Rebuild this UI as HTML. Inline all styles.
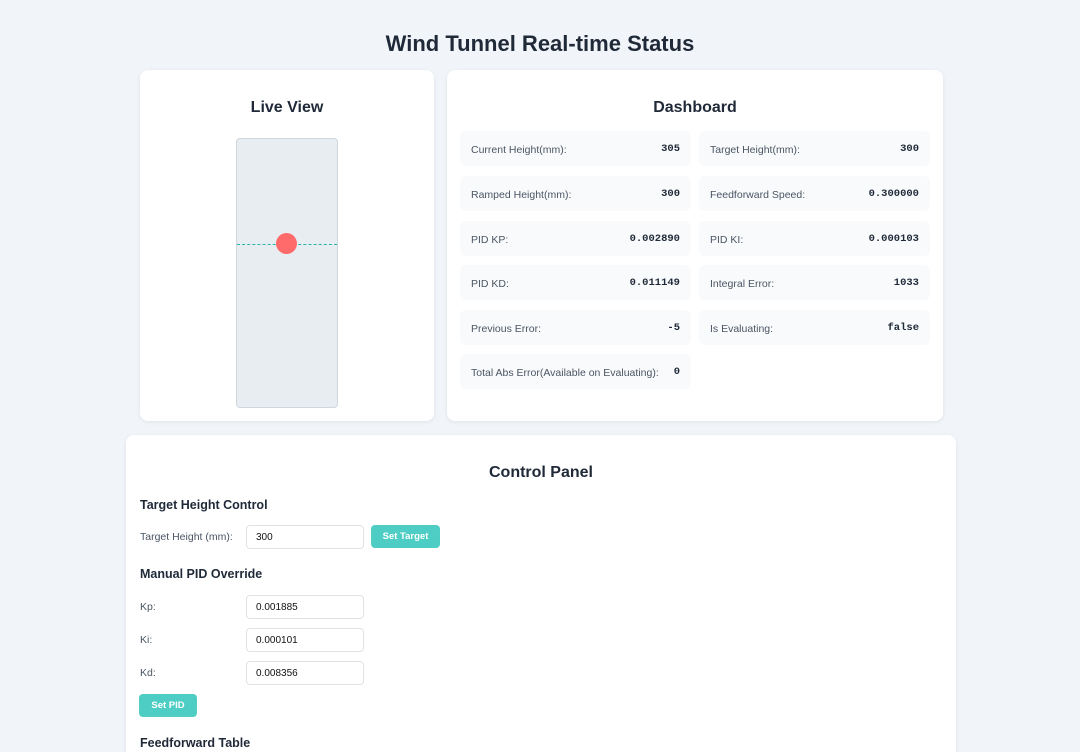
<!DOCTYPE html>
<html><head><style>
*{box-sizing:border-box;margin:0;padding:0}
html,body{width:1080px;height:752px;overflow:hidden}
body{background:#f1f5f9;font-family:"Liberation Sans","DejaVu Sans",sans-serif;color:#1f2937;position:relative}
.a{position:absolute}
.card{position:absolute;background:#fff;border-radius:8px;box-shadow:0 1px 4px rgba(0,0,0,.08)}
h1{position:absolute;left:0;width:1080px;top:31px;text-align:center;font-size:22px;font-weight:bold;color:#1f2937}
.h2{position:absolute;font-size:16px;font-weight:bold;text-align:center;color:#1f2937}
.it{position:absolute;width:231px;height:35px;background:#f8fafc;border-radius:6px;font-size:10.5px;color:#4b5563}
.it .l{position:absolute;left:11px;top:13px}
.it .v{position:absolute;right:11px;top:12px;font-family:"Liberation Mono",monospace;font-size:10.5px;color:#1f2937;font-weight:bold}
.h3{position:absolute;font-size:12.5px;font-weight:bold;color:#1f2937}
.lab{position:absolute;font-size:10.5px;color:#4b5563}
.in{position:absolute;width:118px;height:24px;border:1px solid #dfe3e8;border-radius:4px;font-size:10px;padding:6px 9px;color:#111}
.btn{position:absolute;background:#4ecdc4;color:#fff;font-size:9.5px;font-weight:bold;border-radius:4px;text-align:center;line-height:23px;height:23px}
</style></head><body>
<h1>Wind Tunnel Real-time Status</h1>
<div class="card" style="left:140px;top:70px;width:294px;height:351px"></div>
<div class="h2" style="left:140px;width:294px;top:99px">Live View</div>
<div class="a" style="left:236px;top:138px;width:102px;height:270px;background:#e8edf2;border:1px solid #cfd6de;border-radius:4px"></div>
<div class="a" style="left:237px;top:244px;width:100px;border-top:1.5px dashed #2bb5a8"></div>
<div class="a" style="left:276px;top:233px;width:21px;height:21px;border-radius:50%;background:#ff6b6b"></div>

<div class="card" style="left:447px;top:70px;width:496px;height:351px"></div>
<div class="h2" style="left:447px;width:496px;top:99px">Dashboard</div>
<div class="it" style="left:460px;top:131px"><span class="l">Current Height(mm):</span><span class="v">305</span></div>
<div class="it" style="left:699px;top:131px"><span class="l">Target Height(mm):</span><span class="v">300</span></div>
<div class="it" style="left:460px;top:176px"><span class="l">Ramped Height(mm):</span><span class="v">300</span></div>
<div class="it" style="left:699px;top:176px"><span class="l">Feedforward Speed:</span><span class="v">0.300000</span></div>
<div class="it" style="left:460px;top:221px"><span class="l">PID KP:</span><span class="v">0.002890</span></div>
<div class="it" style="left:699px;top:221px"><span class="l">PID KI:</span><span class="v">0.000103</span></div>
<div class="it" style="left:460px;top:265px"><span class="l">PID KD:</span><span class="v">0.011149</span></div>
<div class="it" style="left:699px;top:265px"><span class="l">Integral Error:</span><span class="v">1033</span></div>
<div class="it" style="left:460px;top:310px"><span class="l">Previous Error:</span><span class="v">-5</span></div>
<div class="it" style="left:699px;top:310px"><span class="l">Is Evaluating:</span><span class="v">false</span></div>
<div class="it" style="left:460px;top:354px"><span class="l">Total Abs Error(Available on Evaluating):</span><span class="v">0</span></div>

<div class="card" style="left:126px;top:435px;width:830px;height:340px"></div>
<div class="h2" style="left:126px;width:830px;top:464px">Control Panel</div>
<div class="h3" style="left:140px;top:498px">Target Height Control</div>
<div class="lab" style="left:140px;top:531px">Target Height (mm):</div>
<div class="in" style="left:246px;top:525px">300</div>
<div class="btn" style="left:371px;top:525px;width:69px">Set Target</div>
<div class="h3" style="left:140px;top:567px">Manual PID Override</div>
<div class="lab" style="left:140px;top:601px">Kp:</div>
<div class="in" style="left:246px;top:595px">0.001885</div>
<div class="lab" style="left:140px;top:634px">Ki:</div>
<div class="in" style="left:246px;top:628px">0.000101</div>
<div class="lab" style="left:140px;top:667px">Kd:</div>
<div class="in" style="left:246px;top:661px">0.008356</div>
<div class="btn" style="left:139px;top:694px;width:58px">Set PID</div>
<div class="h3" style="left:140px;top:736px">Feedforward Table</div>
</body></html>
